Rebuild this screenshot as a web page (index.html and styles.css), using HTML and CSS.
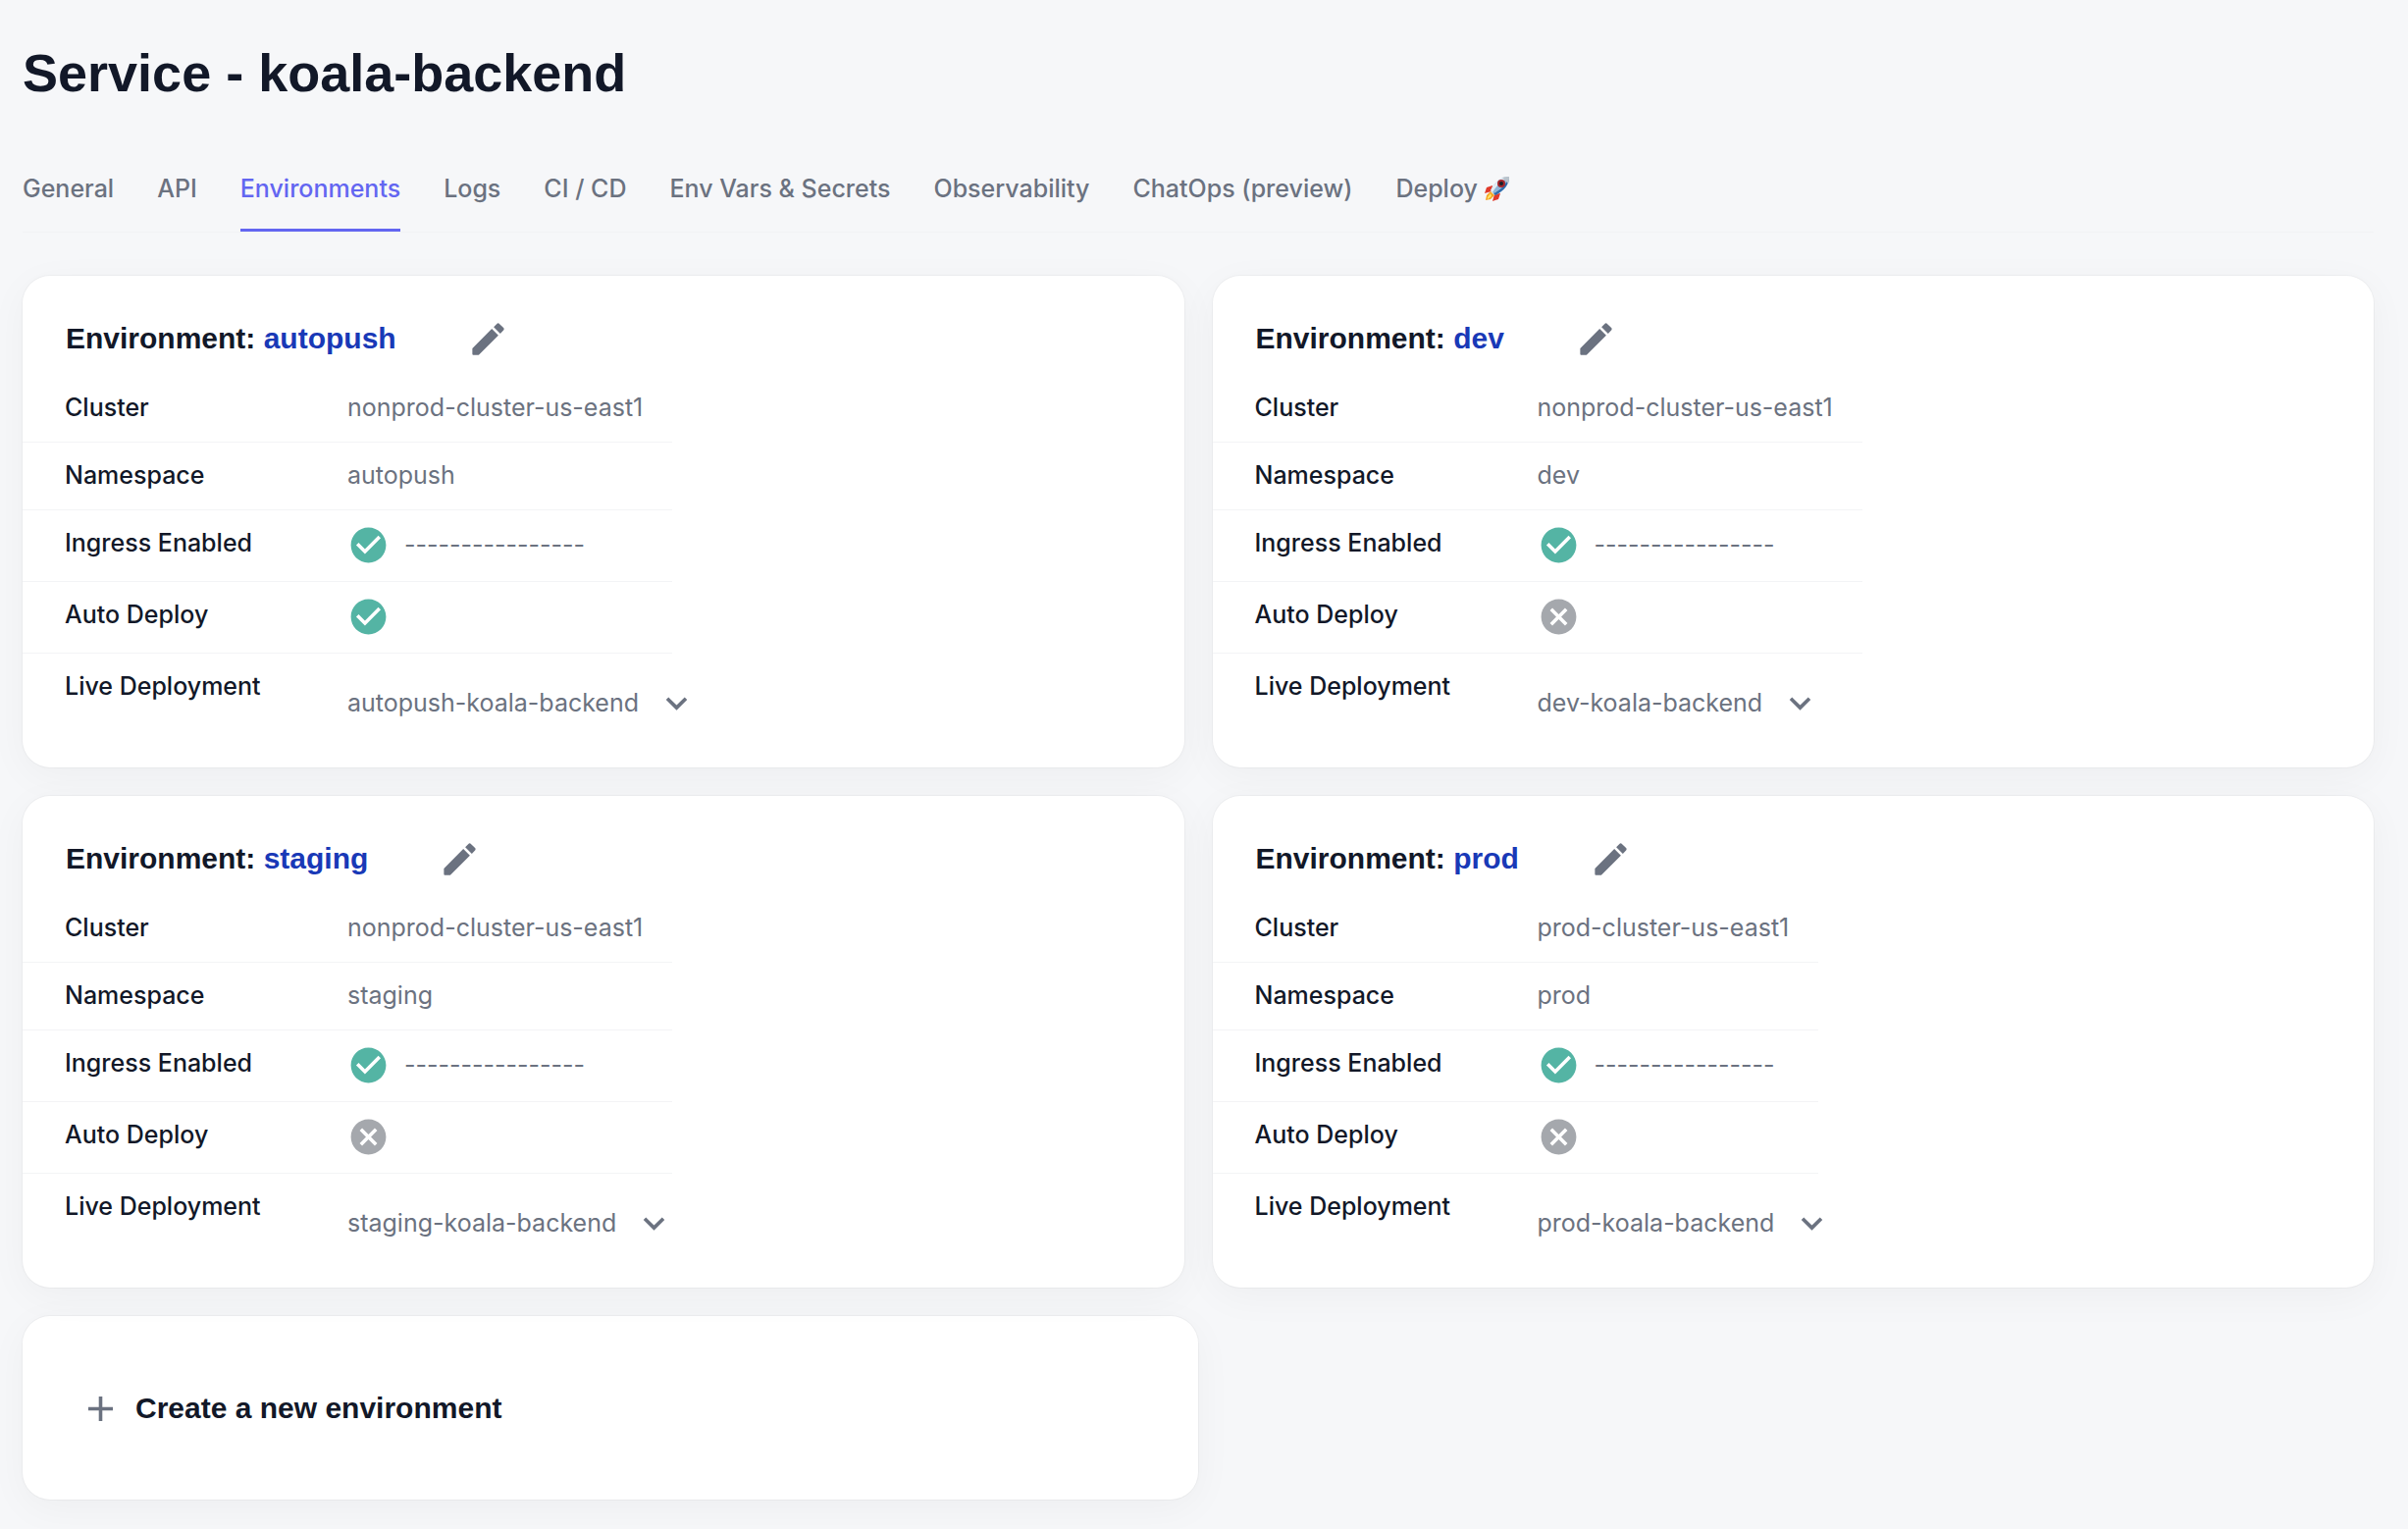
FILE: index.html
```html
<!DOCTYPE html>
<html lang="en">
<head>
<meta charset="utf-8">
<title>Service - koala-backend</title>
<link rel="stylesheet" href="styles.css">
</head>
<body>
<svg class="sprite" aria-hidden="true">
  <symbol id="edit" viewBox="0 0 24 24"><path d="M3 17.46v3.04c0 .28.22.5.5.5h3.04c.13 0 .26-.05.35-.15L17.81 9.94l-3.75-3.75L3.15 17.1c-.1.1-.15.22-.15.36zM20.71 7.04c.39-.39.39-1.02 0-1.41l-2.34-2.34c-.39-.39-1.02-.39-1.41 0l-1.83 1.83 3.75 3.75 1.83-1.83z"/></symbol>
  <symbol id="check" viewBox="0 0 24 24"><path d="M12 2C6.48 2 2 6.48 2 12s4.48 10 10 10 10-4.48 10-10S17.52 2 12 2zm-2 15l-5-5 1.41-1.41L10 14.17l7.59-7.59L19 8l-9 9z"/></symbol>
  <symbol id="cancel" viewBox="0 0 24 24"><path d="M12 2C6.47 2 2 6.47 2 12s4.47 10 10 10 10-4.47 10-10S17.53 2 12 2zm5 13.59L15.59 17 12 13.41 8.41 17 7 15.59 10.59 12 7 8.41 8.41 7 12 10.59 15.59 7 17 8.41 13.41 12 17 15.59z"/></symbol>
  <symbol id="more" viewBox="0 0 24 24"><path d="M16.59 8.59L12 13.17 7.41 8.59 6 10l6 6 6-6z"/></symbol>
  <symbol id="add" viewBox="0 0 24 24"><path d="M19 13h-6v6h-2v-6H5v-2h6V5h2v6h6v2z"/></symbol>
</svg>
<main class="page">
  <h1 class="title">Service - koala-backend</h1>
  <nav class="tabs" aria-label="Service sections">
    <a class="tab" href="#general">General</a>
    <a class="tab" href="#api">API</a>
    <a class="tab tab-active" href="#environments" aria-current="page">Environments</a>
    <a class="tab" href="#logs">Logs</a>
    <a class="tab" href="#cicd">CI / CD</a>
    <a class="tab" href="#env-vars">Env Vars &amp; Secrets</a>
    <a class="tab" href="#observability">Observability</a>
    <a class="tab" href="#chatops">ChatOps (preview)</a>
    <a class="tab tab-deploy" href="#deploy">Deploy
      <svg class="rocket" viewBox="0 0 26 26" aria-hidden="true">
        <path d="M8 10L2 12L0 18L7 16zM16 18L14 24L8 26L10 19z" fill="#e03a2b"/>
        <path d="M6 16L2 20L1 25L6 24L10 20z" fill="#f5a623"/>
        <path d="M6 18L3 22L3 24L7 21z" fill="#ffe66b"/>
        <path d="M25 1C17 1 11 6 6 15L11 20C20 15 25 9 25 1z" fill="#8fb6d8"/>
        <path d="M25 1C17 1 11 6 6 15L8 17C12 10 18 5 25 1z" fill="#e4edf4"/>
        <path d="M9 18L11 20C20 15 25 9 25 1C22 9 16 15 9 18z" fill="#2f6cab"/>
        <path d="M25 1C22 1 20 1 18 2L24 8C25 6 25 4 25 1z" fill="#b9c3cc"/>
        <circle cx="17" cy="8" r="4" fill="#a3262c"/><circle cx="17" cy="8" r="2" fill="#17202c"/>
      </svg>
    </a>
  </nav>
  <section class="grid">
    <article class="card">
      <header class="card-head"><h2 class="heading">Environment: <a class="env" href="#autopush">autopush</a></h2>
        <button class="edit" type="button" aria-label="Edit autopush"><svg class="icon"><use href="#edit"/></svg></button></header>
      <table class="details">
        <tr><th scope="row">Cluster</th><td>nonprod-cluster-us-east1</td></tr>
        <tr><th scope="row">Namespace</th><td>autopush</td></tr>
        <tr><th scope="row">Ingress Enabled</th><td><div class="status"><svg class="icon on"><use href="#check"/></svg><span>----------------</span></div></td></tr>
        <tr><th scope="row">Auto Deploy</th><td><div class="status"><svg class="icon on"><use href="#check"/></svg></div></td></tr>
        <tr><th scope="row"><label for="live-autopush">Live Deployment</label></th><td><div class="picker"><select id="live-autopush"><option>autopush-koala-backend</option></select><svg class="icon chevron"><use href="#more"/></svg></div></td></tr>
      </table>
    </article>
    <article class="card">
      <header class="card-head"><h2 class="heading">Environment: <a class="env" href="#dev">dev</a></h2>
        <button class="edit" type="button" aria-label="Edit dev"><svg class="icon"><use href="#edit"/></svg></button></header>
      <table class="details">
        <tr><th scope="row">Cluster</th><td>nonprod-cluster-us-east1</td></tr>
        <tr><th scope="row">Namespace</th><td>dev</td></tr>
        <tr><th scope="row">Ingress Enabled</th><td><div class="status"><svg class="icon on"><use href="#check"/></svg><span>----------------</span></div></td></tr>
        <tr><th scope="row">Auto Deploy</th><td><div class="status"><svg class="icon off"><use href="#cancel"/></svg></div></td></tr>
        <tr><th scope="row"><label for="live-dev">Live Deployment</label></th><td><div class="picker"><select id="live-dev"><option>dev-koala-backend</option></select><svg class="icon chevron"><use href="#more"/></svg></div></td></tr>
      </table>
    </article>
    <article class="card">
      <header class="card-head"><h2 class="heading">Environment: <a class="env" href="#staging">staging</a></h2>
        <button class="edit" type="button" aria-label="Edit staging"><svg class="icon"><use href="#edit"/></svg></button></header>
      <table class="details">
        <tr><th scope="row">Cluster</th><td>nonprod-cluster-us-east1</td></tr>
        <tr><th scope="row">Namespace</th><td>staging</td></tr>
        <tr><th scope="row">Ingress Enabled</th><td><div class="status"><svg class="icon on"><use href="#check"/></svg><span>----------------</span></div></td></tr>
        <tr><th scope="row">Auto Deploy</th><td><div class="status"><svg class="icon off"><use href="#cancel"/></svg></div></td></tr>
        <tr><th scope="row"><label for="live-staging">Live Deployment</label></th><td><div class="picker"><select id="live-staging"><option>staging-koala-backend</option></select><svg class="icon chevron"><use href="#more"/></svg></div></td></tr>
      </table>
    </article>
    <article class="card">
      <header class="card-head"><h2 class="heading">Environment: <a class="env" href="#prod">prod</a></h2>
        <button class="edit" type="button" aria-label="Edit prod"><svg class="icon"><use href="#edit"/></svg></button></header>
      <table class="details">
        <tr><th scope="row">Cluster</th><td>prod-cluster-us-east1</td></tr>
        <tr><th scope="row">Namespace</th><td>prod</td></tr>
        <tr><th scope="row">Ingress Enabled</th><td><div class="status"><svg class="icon on"><use href="#check"/></svg><span>----------------</span></div></td></tr>
        <tr><th scope="row">Auto Deploy</th><td><div class="status"><svg class="icon off"><use href="#cancel"/></svg></div></td></tr>
        <tr><th scope="row"><label for="live-prod">Live Deployment</label></th><td><div class="picker"><select id="live-prod"><option>prod-koala-backend</option></select><svg class="icon chevron"><use href="#more"/></svg></div></td></tr>
      </table>
    </article>
  </section>
  <div class="create-row">
    <button class="card create" type="button"><svg class="icon"><use href="#add"/></svg><span class="heading">Create a new environment</span></button>
  </div>
</main>
</body>
</html>
```

FILE: styles.css
```css
* { box-sizing: border-box; }

body {
  margin: 0;
  background: #f6f7f9;
  color: #121828;
  font: 400 25px/39px Inter, "Liberation Sans", sans-serif;
}

.sprite { display: none; }

.page { padding: 40px 35px 30px 23px; }

.title {
  margin: 0;
  font: 700 54px/68px "Liberation Sans", Arial, sans-serif;
}

.tabs {
  display: flex;
  gap: 44px;
  margin: 44px 0;
  border-bottom: 1px solid #f1f3f5;
}

.tab {
  height: 84px;
  padding-top: 21px;
  color: #6b7280;
  font-weight: 500;
  text-decoration: none;
  border-bottom: 3px solid transparent;
}

.tab-active {
  color: #6366f1;
  border-bottom-color: #6366f1;
}

.tab-deploy {
  display: flex;
  gap: 7px;
}

.rocket {
  width: 26px;
  height: 26px;
  margin-top: 6px;
}

.grid {
  display: grid;
  grid-template-columns: 1fr 1fr;
  gap: 29px;
}

.card {
  padding: 42px 0 15px;
  background: #fff;
  border: 0;
  border-radius: 28px;
  box-shadow: 0 9px 40px rgba(0, 0, 0, 0.04), 0 0 0 1px rgba(0, 0, 0, 0.03);
}

.card-head {
  display: flex;
  align-items: center;
  gap: 72px;
  padding: 0 44px;
  margin-bottom: 15px;
}

.heading {
  margin: 0;
  color: #121828;
  font: 700 30px/44px "Liberation Sans", Arial, sans-serif;
}

.env {
  color: #1939b7;
  text-decoration: none;
}

.edit {
  display: flex;
  padding: 0;
  border: 0;
  background: none;
  color: #6b7280;
}

.icon {
  flex: none;
  width: 43px;
  height: 43px;
  fill: currentColor;
}

.details {
  border-collapse: separate;
  border-spacing: 0;
  white-space: nowrap;
}

.details th,
.details td {
  padding: 14px 30px 15px 43px;
  border-bottom: 1px solid #f3f4f6;
  text-align: left;
  vertical-align: top;
}

.details th {
  width: 288px;
  font-weight: 500;
}

.details td { color: #6b7280; }

.details tr:last-child > * { border-bottom: 0; }

.status {
  display: flex;
  align-items: center;
  gap: 15px;
}

.on { color: #54b4a4; }

.off { color: #a5a8ad; }

.picker {
  display: flex;
  align-items: center;
  gap: 16px;
  width: 0;
  padding: 15px 0 14px;
}

.picker select {
  appearance: none;
  flex: none;
  padding: 0;
  border: 0;
  background: none;
  color: inherit;
  font: inherit;
}

.chevron { pointer-events: none; }

.create-row {
  width: 50%;
  margin-top: 29px;
}

.create {
  display: flex;
  align-items: center;
  gap: 14px;
  width: 100%;
  padding: 72px 58px 71px;
  color: #6b7280;
}
```
